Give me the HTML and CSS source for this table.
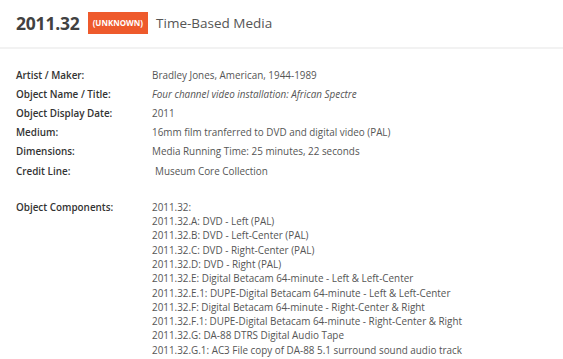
FILE: index.html
```html
<!DOCTYPE html>
<html lang="en">
<head>
<meta charset="utf-8">
<title>2011.32 Time-Based Media</title>
<link rel="stylesheet" href="styles.css">
</head>
<body>
<header class="head">
  <h1 class="accession">2011.32</h1>
  <span class="badge">(UNKNOWN)</span>
  <span class="dept">Time-Based Media</span>
</header>
<section class="details">
  <dl class="facts">
    <div class="row"><dt>Artist / Maker:</dt><dd>Bradley Jones, American, 1944-1989</dd></div>
    <div class="row"><dt>Object Name / Title:</dt><dd><em>Four channel video installation: African Spectre</em></dd></div>
    <div class="row"><dt>Object Display Date:</dt><dd>2011</dd></div>
    <div class="row"><dt>Medium:</dt><dd>16mm film tranferred to DVD and digital video (PAL)</dd></div>
    <div class="row"><dt>Dimensions:</dt><dd>Media Running Time: 25 minutes, 22 seconds</dd></div>
    <div class="row"><dt>Credit Line:</dt><dd class="indent">Museum Core Collection</dd></div>
  </dl>
  <dl class="facts components">
    <div class="row"><dt>Object Components:</dt>
      <dd>
        <ul class="comp-list">
          <li>2011.32:</li>
          <li>2011.32.A: DVD - Left (PAL)</li>
          <li>2011.32.B: DVD - Left-Center (PAL)</li>
          <li>2011.32.C: DVD - Right-Center (PAL)</li>
          <li>2011.32.D: DVD - Right (PAL)</li>
          <li>2011.32.E: Digital Betacam 64-minute - Left &amp; Left-Center</li>
          <li>2011.32.E.1: DUPE-Digital Betacam 64-minute - Left &amp; Left-Center</li>
          <li>2011.32.F: Digital Betacam 64-minute - Right-Center &amp; Right</li>
          <li>2011.32.F.1: DUPE-Digital Betacam 64-minute - Right-Center &amp; Right</li>
          <li>2011.32.G: DA-88 DTRS Digital Audio Tape</li>
          <li>2011.32.G.1: AC3 File copy of DA-88 5.1 surround sound audio track</li>
        </ul>
      </dd>
    </div>
  </dl>
</section>
</body>
</html>
```
FILE: styles.css
```css
* { box-sizing: border-box; }
html, body { margin: 0; padding: 0; background: #fff; }
body {
  font-family: "Open Sans", "Liberation Sans", sans-serif;
  color: #555;
  overflow: hidden;
}
.head {
  display: flex;
  align-items: center;
  gap: 8px;
  height: 49px;
  padding: 0 0 2px 16px;
  border-bottom: 2px solid #f2f2f2;
}
.accession {
  margin: 0;
  font-size: 17.5px;
  font-weight: 700;
  color: #414141;
  letter-spacing: -0.2px;
}
.badge {
  background: #ee5a2c;
  color: #fff;
  font-size: 8px;
  font-weight: 700;
  height: 22px;
  line-height: 22px;
  padding: 0 5px;
}
.dept {
  font-size: 13.5px;
  color: #555;
}
.details {
  padding: 16px 16px 0 16px;
}
.facts {
  margin: 0;
  font-size: 9.9px;
}
.row {
  display: flex;
  line-height: 14px;
  padding: 2.6px 0;
}
.row dt {
  width: 136px;
  flex: none;
  font-weight: 600;
  color: #333;
}
.row dd {
  margin: 0;
  color: #555;
}
.row dd.indent { padding-left: 3px; }
.components { margin-top: 17px; }
.comp-list {
  list-style: none;
  margin: 0;
  padding: 0;
}
.comp-list li { line-height: 14.3px; }
```
